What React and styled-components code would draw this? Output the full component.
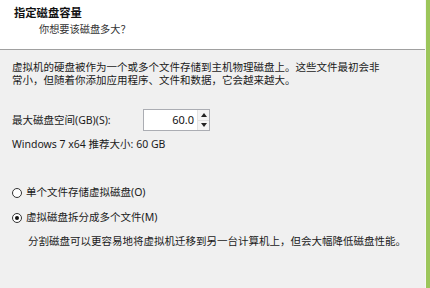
import React, { useState } from "react";
import styled, { createGlobalStyle } from "styled-components";

const GlobalStyle = createGlobalStyle`
  html, body {
    margin: 0;
    padding: 0;
    background: #9cc65b;
  }
  body {
    width: 430px;
    height: 288px;
    overflow: hidden;
    font-family: "Noto Sans", "Noto Sans CJK SC", sans-serif;
  }
`;

const Frame = styled.div`
  display: flex;
  width: 430px;
  height: 288px;
`;

const Dialog = styled.div`
  display: flex;
  flex-direction: column;
  width: 425px;
  height: 288px;
  background: #f0f0f0;
  border-right: 1px solid #f7f7f4;
`;

const Header = styled.div`
  height: 50px;
  box-sizing: border-box;
  padding: 5px 0 0 14px;
  background: #ffffff;
  border-bottom: 1px solid #a0a0a0;
`;

const Title = styled.div`
  font-size: 11.3px;
  font-weight: 700;
  line-height: 16px;
  color: #111;
`;

const SubTitle = styled.div`
  padding-left: 25px;
  font-size: 10.2px;
  line-height: 17px;
  color: #333;
`;

const Body = styled.div`
  display: flex;
  flex-direction: column;
  padding: 11px 0 0 12px;
  color: #1a1a1a;
  font-size: 10.5px;
`;

const Paragraph = styled.p`
  margin: 0;
  width: 370px;
  line-height: 13px;
`;

const SizeRow = styled.div`
  display: flex;
  align-items: center;
  margin-top: 22px;
  height: 22px;
`;

const Label = styled.span`
  width: 131px;
  line-height: 13px;
`;

const Spinner = styled.div`
  display: flex;
  width: 67px;
  height: 22px;
  box-sizing: border-box;
  background: #fff;
  border: 1px solid #abadb3;
`;

const SpinValue = styled.div`
  flex: 1;
  text-align: right;
  padding-right: 3px;
  font-size: 11px;
  line-height: 20px;
  color: #111;
`;

const SpinButtons = styled.div`
  display: flex;
  flex-direction: column;
  width: 11px;
  border-left: 1px solid #e3e3e3;
`;

const SpinButton = styled.div`
  flex: 1;
  display: flex;
  align-items: center;
  justify-content: center;
  background: #f4f4f4;
  border-bottom: ${(p) => (p.$top ? "1px solid #e0e0e0" : "none")};
`;

const Arrow = styled.div`
  width: 0;
  height: 0;
  border-left: 3px solid transparent;
  border-right: 3px solid transparent;
  ${(p) =>
    p.$up ? "border-bottom: 4px solid #222;" : "border-top: 4px solid #222;"}
`;

const Hint = styled.div`
  margin-top: 7px;
  line-height: 13px;
`;

const RadioRow = styled.label`
  display: flex;
  align-items: center;
  gap: 4px;
  margin-top: ${(p) => p.$gap}px;
  line-height: 13px;
  cursor: default;
`;

const RadioCircle = styled.span`
  display: inline-flex;
  align-items: center;
  justify-content: center;
  width: 10px;
  height: 10px;
  box-sizing: border-box;
  border-radius: 50%;
  border: 1px solid #333;
  background: #fff;

  &::after {
    content: "";
    width: 4px;
    height: 4px;
    border-radius: 50%;
    background: ${(p) => (p.$checked ? "#111" : "transparent")};
  }
`;

const Note = styled.div`
  margin-top: 11px;
  padding-left: 16px;
  line-height: 13px;
`;

export default function App() {
  const [split, setSplit] = useState(true);

  return (
    <Frame>
      <GlobalStyle />
      <Dialog>
        <Header>
          <Title>指定磁盘容量</Title>
          <SubTitle>你想要该磁盘多大？</SubTitle>
        </Header>
        <Body>
          <Paragraph>
            虚拟机的硬盘被作为一个或多个文件存储到主机物理磁盘上。这些文件最初会非常小，但随着你添加应用程序、文件和数据，它会越来越大。
          </Paragraph>
          <SizeRow>
            <Label>最大磁盘空间(GB)(S):</Label>
            <Spinner>
              <SpinValue>60.0</SpinValue>
              <SpinButtons>
                <SpinButton $top>
                  <Arrow $up />
                </SpinButton>
                <SpinButton>
                  <Arrow />
                </SpinButton>
              </SpinButtons>
            </Spinner>
          </SizeRow>
          <Hint>Windows 7 x64 推荐大小: 60 GB</Hint>
          <RadioRow $gap={35} onClick={() => setSplit(false)}>
            <RadioCircle $checked={!split} />
            单个文件存储虚拟磁盘(O)
          </RadioRow>
          <RadioRow $gap={12} onClick={() => setSplit(true)}>
            <RadioCircle $checked={split} />
            虚拟磁盘拆分成多个文件(M)
          </RadioRow>
          <Note>
            分割磁盘可以更容易地将虚拟机迁移到另一台计算机上，但会大幅降低磁盘性能。
          </Note>
        </Body>
      </Dialog>
    </Frame>
  );
}
